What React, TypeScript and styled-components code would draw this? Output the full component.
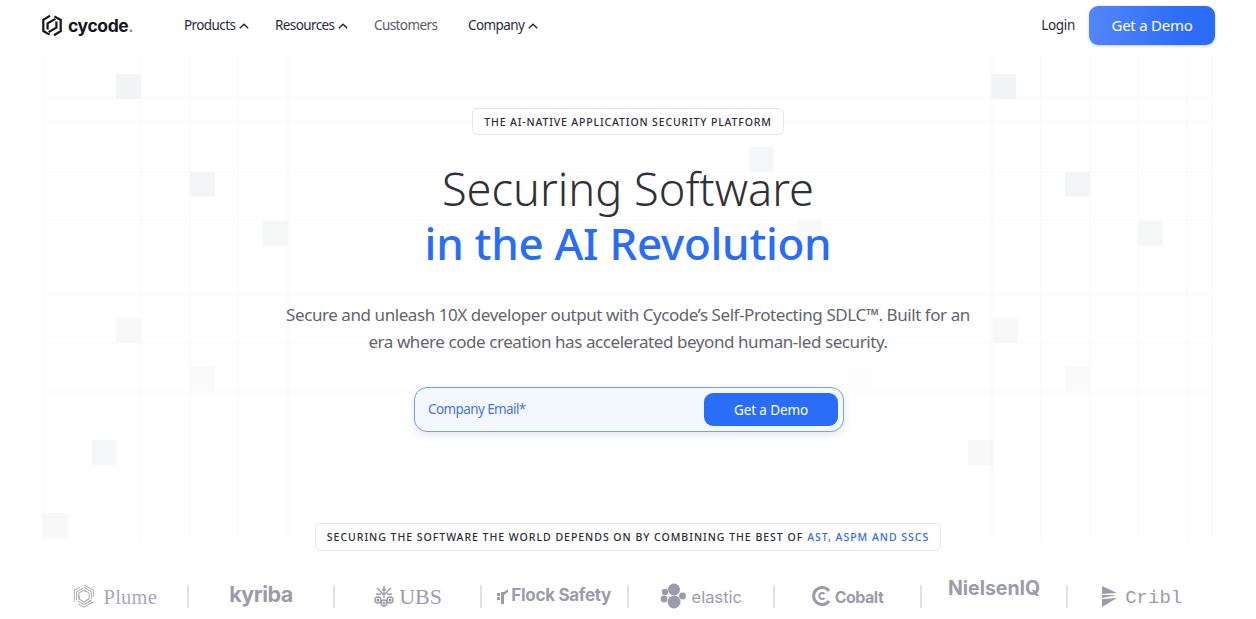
import React from 'react';
import styled, { createGlobalStyle } from 'styled-components';

const GlobalStyle = createGlobalStyle`
  html, body {
    margin: 0;
    padding: 0;
    background: #fff;
    overflow: hidden;
  }
  * {
    box-sizing: border-box;
  }
`;

const Page = styled.div`
  position: relative;
  width: 1256px;
  height: 619px;
  overflow: hidden;
  background: #fff;
  font-family: 'Noto Sans', sans-serif;
`;

const Backdrop = styled.svg`
  position: absolute;
  left: 0;
  top: 0;
  width: 1256px;
  height: 619px;
`;

const Content = styled.div`
  position: relative;
  display: flex;
  flex-direction: column;
  height: 100%;
`;

const Nav = styled.header`
  display: flex;
  align-items: center;
  height: 50px;
  padding: 0 41px 0 42px;
`;

const Brand = styled.div`
  display: flex;
  align-items: center;
  gap: 6px;
  width: 142px;
  font-family: 'Inter', sans-serif;
  font-weight: 700;
  font-size: 17.5px;
  letter-spacing: -0.4px;
  color: #16161d;
`;

const BrandDot = styled.span`
  color: #8a8a94;
  font-weight: 500;
`;

const Menu = styled.nav`
  display: flex;
  align-items: center;
  flex: 1;
  padding-bottom: 1px;
`;

const MenuItem = styled.a<{ $width: number; $muted?: boolean }>`
  display: flex;
  align-items: center;
  gap: 4px;
  width: ${p => p.$width}px;
  font-size: 13.5px;
  letter-spacing: -0.6px;
  color: ${p => (p.$muted ? '#5c5c68' : '#2b2b40')};
`;

const Login = styled.a`
  font-size: 13.5px;
  letter-spacing: -0.3px;
  color: #2a2a33;
  margin-right: 14px;
  padding-bottom: 1px;
`;

const DemoButton = styled.button`
  width: 126px;
  height: 39px;
  border: 0;
  border-radius: 9px;
  background: linear-gradient(90deg, #5486fb 0%, #2f6ef8 70%, #2a6bf8 100%);
  box-shadow: 0 1px 3px rgba(40, 90, 220, 0.3);
  color: #fff;
  font-family: inherit;
  font-size: 15px;
  letter-spacing: -0.25px;
`;

const Hero = styled.main`
  display: flex;
  flex-direction: column;
  align-items: center;
  padding-top: 58px;
`;

const Tag = styled.div`
  display: flex;
  align-items: center;
  justify-content: center;
  height: 27px;
  padding: 0 11px;
  background: #fff;
  border: 1px solid #e6e6ea;
  border-radius: 5px;
  font-size: 10.5px;
  font-weight: 500;
  letter-spacing: 0.85px;
  color: #2c2c33;
  white-space: nowrap;
`;

const Heading = styled.h1`
  margin: 27px 0 0;
  font-size: 45.2px;
  line-height: 54px;
  font-weight: 300;
  text-align: center;
  color: #303036;
`;

const HeadingAccent = styled.span`
  display: block;
  font-size: 44px;
  font-weight: 500;
  letter-spacing: -0.3px;
  color: #2a6df5;
`;

const Lead = styled.p`
  margin: 31px 0 0;
  width: 700px;
  font-size: 17px;
  line-height: 27px;
  letter-spacing: -0.43px;
  text-align: center;
  color: #64646c;
`;

const EmailForm = styled.form`
  display: flex;
  align-items: center;
  justify-content: space-between;
  width: 430px;
  height: 45px;
  margin: 32px 0 0 2px;
  padding: 0 5px 0 13px;
  background: #f3f7fe;
  border: 1px solid #7a9fe8;
  border-radius: 13px;
  box-shadow: 0 3px 10px rgba(60, 80, 130, 0.14);
`;

const EmailLabel = styled.span`
  font-size: 13.5px;
  letter-spacing: -0.6px;
  color: #4a78d8;
  padding-bottom: 2px;
`;

const FormButton = styled.button`
  width: 134px;
  height: 33px;
  border: 0;
  border-radius: 9px;
  background: #2a6df8;
  color: #fff;
  font-family: inherit;
  font-size: 13.5px;
  letter-spacing: -0.1px;
`;

const ProofTag = styled(Tag)`
  margin-top: 91px;
  height: 28px;
  padding: 0 11px;
  font-size: 10.5px;
  letter-spacing: 0.98px;
`;

const ProofAccent = styled.span`
  color: #2f6de0;
  margin-left: 4px;
`;

const LogoRow = styled.div`
  display: grid;
  grid-template-columns: repeat(8, 1fr);
  align-items: center;
  margin: 30px 41px 0 42px;
  height: 30px;
`;

const LogoCell = styled.div<{ $last?: boolean; $gap?: number }>`
  display: flex;
  align-items: center;
  justify-content: center;
  gap: ${p => p.$gap ?? 5}px;
  height: 23px;
  color: #9c9bab;
  border-right: ${p => (p.$last ? '0' : '2px solid #e2e2e6')};
  white-space: nowrap;
`;

const LogoName = styled.span<{ $font: string; $size: number; $weight?: number; $lift?: number; $spacing?: number; $tone?: string }>`
  font-family: ${p => p.$font};
  font-size: ${p => p.$size}px;
  font-weight: ${p => p.$weight ?? 400};
  letter-spacing: ${p => p.$spacing ?? 0}px;
  color: ${p => p.$tone ?? 'inherit'};
  transform: translateY(${p => p.$lift ?? 0}px);
`;

const squares: [number, number, number][] = [
  [116, 74, 1], [190, 172, 0.9], [263, 221, 0.85], [116, 318, 0.6], [190, 366, 0.45], [92, 440, 0.8], [43, 513, 0.6],
  [991, 74, 1], [1065, 172, 0.9], [1138, 221, 0.85], [993, 318, 0.6], [1065, 366, 0.45], [968, 440, 0.6],
  [749, 147, 0.8], [797, 221, 0.5], [847, 366, 0.2],
];
const vLines = [43, 141, 190, 238, 288, 1041, 992, 1090, 1138, 1187, 1212];
const hLines = [98, 122, 172, 220, 294, 343, 392];

const GridBackdrop = () => (
  <Backdrop viewBox="0 0 1256 619">
    {vLines.map(x => (
      <line key={x} x1={x} x2={x} y1={56} y2={540} stroke="#fafafb" strokeWidth={1.5} />
    ))}
    {hLines.map(y => (
      <line key={y} x1={43} x2={1212} y1={y} y2={y} stroke="#fbfbfc" strokeWidth={1.5} />
    ))}
    {squares.map(([x, y, level]) => (
      <rect key={`${x}-${y}`} x={x} y={y} width={25} height={25} fill="#f3f4f5" opacity={level} />
    ))}
  </Backdrop>
);

const Chevron = () => (
  <svg width="10" height="6" viewBox="0 0 10 6" fill="none" style={{ marginTop: 2 }}>
    <path d="M0.8 5.2 L5 1.2 L9.2 5.2" stroke="#22223a" strokeWidth="1.4" />
  </svg>
);

const CycodeMark = () => (
  <svg width="20" height="23" viewBox="0 0 20 23" fill="none" stroke="#16161d" strokeWidth="2.2">
    <path d="M8 1.8 L1.3 5.8 V17 L7.6 20.6" />
    <path d="M12 21.2 L18.7 17.2 V6 L12.4 2.4" />
    <path d="M5.6 15.6 V9.4 L13.4 4.9" />
    <path d="M14.4 7.4 V13.6 L6.6 18.1" />
  </svg>
);

const plumeTurns = [0, 120, 240];

const PlumeMark = () => (
  <svg width="24" height="24" viewBox="0 0 24 24" fill="none" stroke="#a9a9b5" strokeWidth="1">
    {plumeTurns.map(turn => (
      <g key={turn} transform={`rotate(${turn} 12 12)`}>
        <path d="M12 0.8 L21.7 6.4 V13" />
        <path d="M12 3.4 L19.4 7.7 V15" />
        <path d="M12 6 L17.2 9 V14.5 L14 16.4" />
      </g>
    ))}
  </svg>
);

const UbsMark = () => (
  <svg width="22" height="22" viewBox="0 0 22 22" fill="none" stroke="#9c9bab" strokeWidth="1.4">
    <path d="M11 1 V13 M4 3 L11 10 L18 3 M3 9 H8 M14 9 H19 M9 4 L11 6 L13 4" />
    <circle cx="5" cy="15" r="3" />
    <circle cx="17" cy="15" r="3" />
    <circle cx="11" cy="18" r="3" />
    <circle cx="5" cy="15" r="0.8" />
    <circle cx="17" cy="15" r="0.8" />
    <circle cx="11" cy="18" r="0.8" />
  </svg>
);

const FlockMark = () => (
  <svg width="11" height="15" viewBox="0 0 11 15" fill="#9c9bab">
    <rect x="4" y="3" width="3" height="12" />
    <path d="M7 3 L11 0 V3 L7 6 Z" />
    <rect x="0" y="4" width="3" height="3" />
    <rect x="0" y="8" width="3" height="3" />
  </svg>
);

const ElasticMark = () => (
  <svg width="26" height="26" viewBox="0 0 26 26" fill="#9c9bab">
    <circle cx="14" cy="6.5" r="6" />
    <circle cx="14" cy="19" r="6.5" />
    <circle cx="5" cy="9" r="3.2" />
    <circle cx="4" cy="16" r="3.4" />
    <circle cx="22.5" cy="13" r="3.4" />
  </svg>
);

const CobaltMark = () => (
  <svg width="20" height="20" viewBox="0 0 20 20" fill="none" stroke="#9c9bab">
    <path d="M17 5 A 8.5 8.5 0 1 0 17 15" strokeWidth="3" />
    <path d="M12.5 8 A 3 3 0 1 0 12.5 12" strokeWidth="2" />
  </svg>
);

const CriblMark = () => (
  <svg width="17" height="23" viewBox="0 0 17 23" fill="#9c9bab">
    <path d="M1 1 L16 8 L1 9 Z" />
    <path d="M1 10 H16 L1 13 Z" />
    <path d="M1 14 L16 13 L1 22 Z" />
  </svg>
);

const App: React.FC = () => (
  <>
    <GlobalStyle />
    <Page>
      <GridBackdrop />
      <Content>
        <Nav>
          <Brand>
            <CycodeMark />
            <span>cycode<BrandDot>.</BrandDot></span>
          </Brand>
          <Menu>
            <MenuItem $width={91}>Products <Chevron /></MenuItem>
            <MenuItem $width={99}>Resources <Chevron /></MenuItem>
            <MenuItem $width={94} $muted>Customers</MenuItem>
            <MenuItem $width={90}>Company <Chevron /></MenuItem>
          </Menu>
          <Login>Login</Login>
          <DemoButton>Get a Demo</DemoButton>
        </Nav>
        <Hero>
          <Tag>THE AI-NATIVE APPLICATION SECURITY PLATFORM</Tag>
          <Heading>
            Securing Software
            <HeadingAccent>in the AI Revolution</HeadingAccent>
          </Heading>
          <Lead>
            Secure and unleash 10X developer output with Cycode’s Self-Protecting SDLC™. Built for an era where code creation has accelerated beyond human-led security.
          </Lead>
          <EmailForm>
            <EmailLabel>Company Email*</EmailLabel>
            <FormButton type="button">Get a Demo</FormButton>
          </EmailForm>
          <ProofTag>
            SECURING THE SOFTWARE THE WORLD DEPENDS ON BY COMBINING THE BEST OF
            <ProofAccent>AST, ASPM AND SSCS</ProofAccent>
          </ProofTag>
        </Hero>
        <LogoRow>
          <LogoCell $gap={8}>
            <PlumeMark />
            <LogoName $font="'Liberation Serif', serif" $size={20.5} $spacing={0.2} $lift={1} $tone="#a9a9b5">Plume</LogoName>
          </LogoCell>
          <LogoCell>
            <LogoName $font="'Inter', sans-serif" $size={21.5} $weight={700} $spacing={-0.5} $lift={-2}>kyriba</LogoName>
          </LogoCell>
          <LogoCell $gap={4}>
            <UbsMark />
            <LogoName $font="'Liberation Serif', serif" $size={22} $lift={1}>UBS</LogoName>
          </LogoCell>
          <LogoCell $gap={3}>
            <FlockMark />
            <LogoName $font="'Inter', sans-serif" $size={17} $weight={700} $spacing={-0.3} $lift={-1}>Flock Safety</LogoName>
          </LogoCell>
          <LogoCell $gap={6}>
            <ElasticMark />
            <LogoName $font="'Inter', sans-serif" $size={16.5} $lift={1}>elastic</LogoName>
          </LogoCell>
          <LogoCell $gap={3}>
            <CobaltMark />
            <LogoName $font="'Inter', sans-serif" $size={16} $weight={700} $spacing={-0.5} $lift={1}>Cobalt</LogoName>
          </LogoCell>
          <LogoCell>
            <LogoName $font="'Inter', sans-serif" $size={19.5} $weight={700} $lift={-8}>NielsenIQ</LogoName>
          </LogoCell>
          <LogoCell $last $gap={7}>
            <CriblMark />
            <LogoName $font="'Liberation Mono', monospace" $size={19} $lift={2}>Cribl</LogoName>
          </LogoCell>
        </LogoRow>
      </Content>
    </Page>
  </>
);

export default App;
